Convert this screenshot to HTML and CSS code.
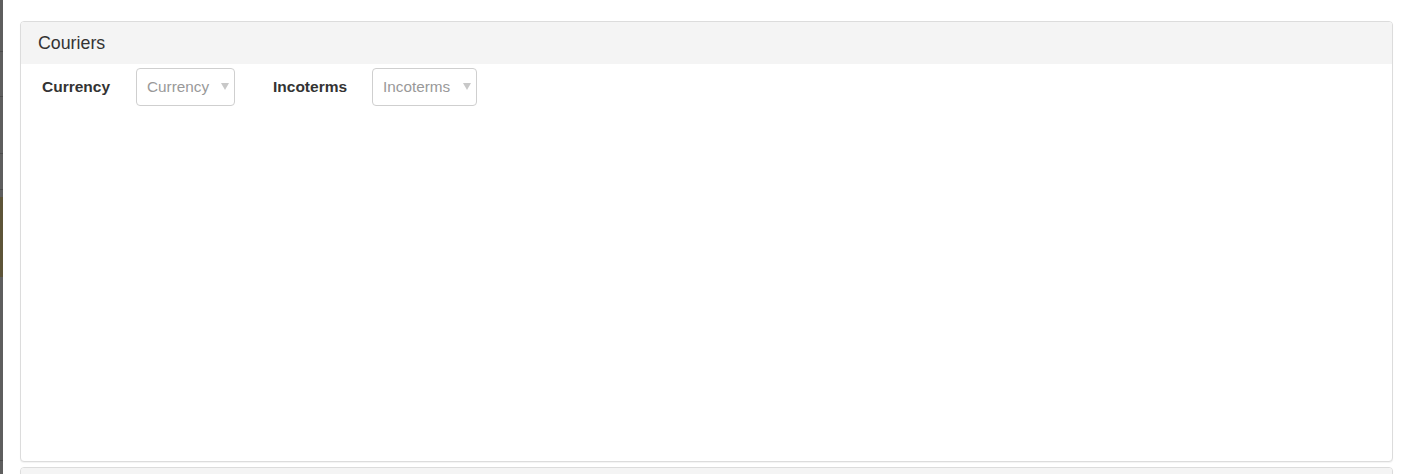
FILE: index.html
```html
<!DOCTYPE html>
<html>
<head>
<meta charset="utf-8">
<link rel="stylesheet" href="styles.css">
</head>
<body>
<div class="page">
  <div class="edge"></div>
  <main class="main">
    <section class="panel">
      <div class="panel-head">Couriers</div>
      <div class="panel-body">
        <div class="filters">
          <label class="flabel">Currency</label>
          <div class="select sel-currency"><span class="ph">Currency</span><span class="caret"></span></div>
          <label class="flabel lbl-inco">Incoterms</label>
          <div class="select sel-inco"><span class="ph">Incoterms</span><span class="caret"></span></div>
        </div>
      </div>
    </section>
    <section class="panel panel-next">
      <div class="panel-head"></div>
    </section>
  </main>
</div>
</body>
</html>
```
FILE: styles.css
```css
html, body {
  margin: 0;
  padding: 0;
  background: #fff;
  height: 474px;
  overflow: hidden;
  font-family: "Liberation Sans", Arial, sans-serif;
  color: #333;
}
.page {
  display: flex;
  height: 474px;
  overflow: hidden;
}
.edge {
  width: 3px;
  flex: none;
  background: linear-gradient(to bottom,
    #5e5e5e 0, #5e5e5e 51px, #4c4c4c 51px, #4c4c4c 52px,
    #5e5e5e 52px, #5e5e5e 96px, #4c4c4c 96px, #4c4c4c 97px,
    #5e5e5e 97px, #5e5e5e 153px, #4c4c4c 153px, #4c4c4c 154px,
    #5e5e5e 154px, #5e5e5e 189px, #4c4c4c 189px, #4c4c4c 190px,
    #5e5e5e 190px, #5e5e5e 197px, #5d5438 197px, #5d5438 277px,
    #5e5e5e 277px, #5e5e5e 460px, #4c4c4c 460px, #4c4c4c 461px,
    #5e5e5e 461px);
}
.main {
  flex: 1;
  padding: 21px 8px 0 17px;
  display: flex;
  flex-direction: column;
  gap: 5px;
  overflow: hidden;
}
.panel {
  border: 1px solid #dcdcdc;
  border-radius: 4px;
  background: #fff;
  box-shadow: 0 1px 1px rgba(0,0,0,0.05);
  overflow: hidden;
  flex: none;
}
.panel-head {
  background: #f4f4f4;
  height: 42px;
  padding-left: 17px;
  font-size: 17.8px;
  line-height: 42px;
  color: #333;
}
.panel-body {
  height: 393px;
  padding: 4px 21px 0;
}
.filters {
  display: flex;
  align-items: center;
}
.flabel {
  font-weight: bold;
  font-size: 15.5px;
  color: #333;
  width: 94px;
}
.lbl-inco {
  margin-left: 38px;
  width: 99px;
}
.select {
  height: 36px;
  border: 1px solid #cfcfcf;
  border-radius: 4px;
  display: flex;
  align-items: center;
  padding-left: 10px;
  box-sizing: content-box;
  position: relative;
}
.sel-currency { width: 87px; }
.sel-inco { width: 93px; }
.ph {
  font-size: 15.3px;
  color: #999;
}
.caret {
  position: absolute;
  right: 5px;
  top: 14px;
  width: 0;
  height: 0;
  border-left: 4px solid transparent;
  border-right: 4px solid transparent;
  border-top: 7px solid #c8c8c8;
}
.panel-next {
  height: 40px;
}
```
